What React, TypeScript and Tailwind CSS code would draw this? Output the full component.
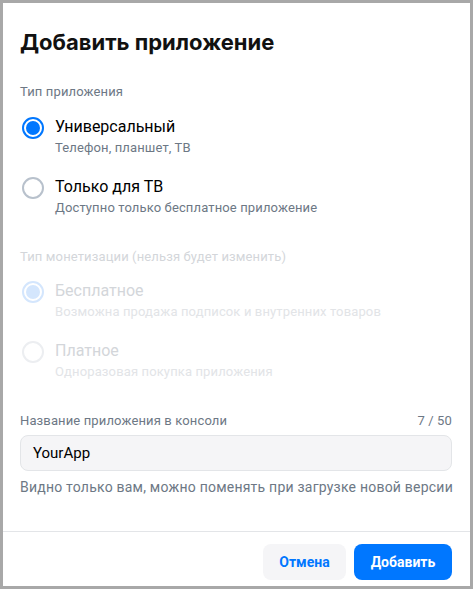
import React from 'react'

type Option = {
  title: string
  hint: string
  checked?: boolean
  disabled?: boolean
}

const appTypes: Option[] = [
  { title: 'Универсальный', hint: 'Телефон, планшет, ТВ', checked: true },
  { title: 'Только для ТВ', hint: 'Доступно только бесплатное приложение' },
]

const monetization: Option[] = [
  { title: 'Бесплатное', hint: 'Возможна продажа подписок и внутренних товаров', checked: true, disabled: true },
  { title: 'Платное', hint: 'Одноразовая покупка приложения', disabled: true },
]

const Radio: React.FC<{ checked?: boolean; disabled?: boolean }> = ({ checked, disabled }) => {
  if (checked) {
    return (
      <span
        className={`flex h-[22px] w-[22px] shrink-0 items-center justify-center rounded-full border-2 ${
          disabled ? 'border-[#d4e6fd]' : 'border-[#0077ff]'
        }`}
      >
        <span className={`h-[14px] w-[14px] rounded-full ${disabled ? 'bg-[#d4e6fd]' : 'bg-[#0077ff]'}`} />
      </span>
    )
  }
  return (
    <span
      className={`h-[22px] w-[22px] shrink-0 rounded-full border-2 ${
        disabled ? 'border-[#eceef1]' : 'border-[#b8c1cc]'
      }`}
    />
  )
}

const RadioRow: React.FC<{ option: Option; className?: string }> = ({ option, className }) => (
  <div className={`flex items-start gap-[11px] pl-[2px] ${className ?? ''}`}>
    <Radio checked={option.checked} disabled={option.disabled} />
    <div>
      <div className={`text-[16px] leading-5 ${option.disabled ? 'text-[#d3d6da]' : 'text-black'}`}>
        {option.title}
      </div>
      <div
        className={`mt-[2px] text-[13px] leading-[18px] tracking-[0.13px] ${
          option.disabled ? 'text-[#e2e4e7]' : 'text-[#6d7885]'
        }`}
      >
        {option.hint}
      </div>
    </div>
  </div>
)

export default function App() {
  return (
    <div
      className="flex h-[589px] w-[473px] flex-col border-[3px] border-[#a8a8a8] bg-white"
      style={{ fontFamily: 'Roboto, "Noto Sans", sans-serif' }}
    >
      <div className="flex-1 pl-[17px] pr-[18px]">
        <h1 className="mt-[25px] text-[22px] font-bold leading-7 text-[#111]" style={{ fontFamily: 'Inter, Roboto, sans-serif' }}>
          Добавить приложение
        </h1>

        <div className="mt-[27px] text-[13px] leading-[18px] tracking-[0.13px] text-[#6d7885]">Тип приложения</div>
        <RadioRow option={appTypes[0]} className="mt-[16px]" />
        <RadioRow option={appTypes[1]} className="mt-[20px]" />

        <div className="mt-[31px] text-[13px] leading-[18px] tracking-[0.13px] text-[#d3d6da]">
          Тип монетизации (нельзя будет изменить)
        </div>
        <RadioRow option={monetization[0]} className="mt-[15px]" />
        <RadioRow option={monetization[1]} className="mt-[20px]" />

        <div className="mt-[31px] flex items-center justify-between text-[13px] leading-[18px] tracking-[0.13px] text-[#6d7885]">
          <span>Название приложения в консоли</span>
          <span>7 / 50</span>
        </div>
        <div className="mt-[5px] flex h-9 items-center rounded-lg border border-[#e3e5e8] bg-[#f5f5f7] px-3 text-[15px] text-black">
          YourApp
        </div>
        <div className="mt-[7px] whitespace-nowrap text-[14px] leading-[18px] tracking-[0.22px] text-[#6d7885]">
          Видно только вам, можно поменять при загрузке новой версии
        </div>
      </div>

      <div className="flex justify-end gap-2 border-t border-[#e3e5e8] pb-[6px] pl-[17px] pr-[18px] pt-3">
        <button className="h-9 w-[83px] rounded-lg bg-[#f5f5f7] text-[14px] font-bold text-[#0077ff]">Отмена</button>
        <button className="h-9 w-[98px] rounded-lg bg-[#0077ff] text-[14px] font-bold text-white">Добавить</button>
      </div>
    </div>
  )
}
